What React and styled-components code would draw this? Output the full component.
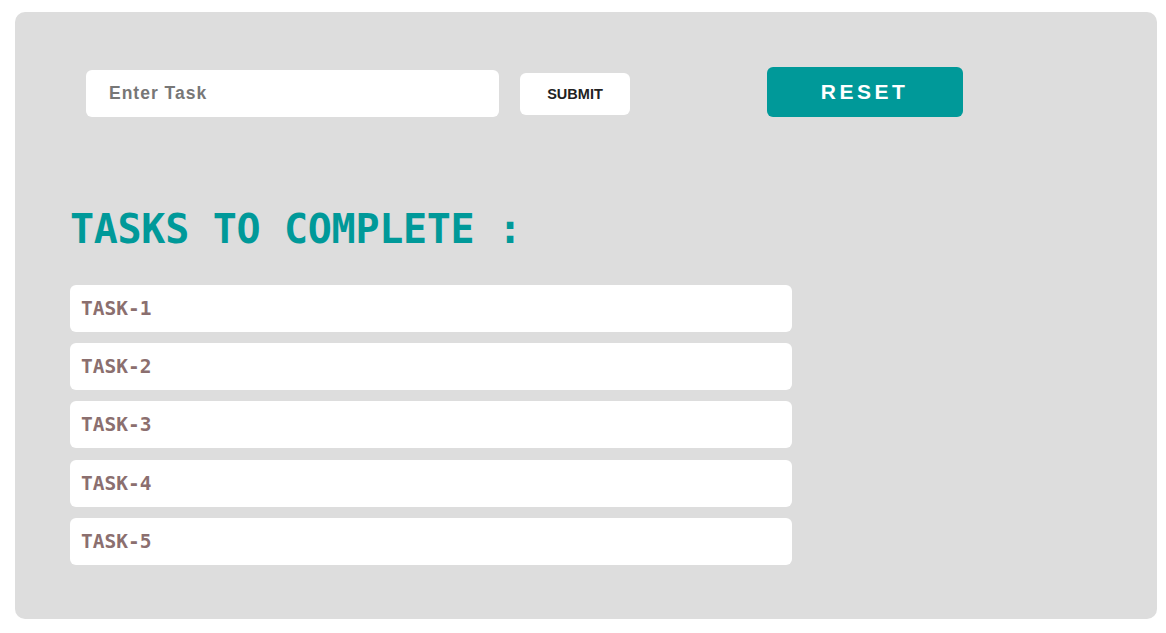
import React from "react";
import styled, { createGlobalStyle } from "styled-components";

const Global = createGlobalStyle`
  html, body { margin: 0; padding: 0; background: #ffffff; }
  body { font-family: "Liberation Sans", Arial, sans-serif; }
`;

const Page = styled.div`
  padding: 12px 9px 14px 15px;
`;

const Panel = styled.main`
  background: #dddddd;
  border-radius: 10px;
  height: 607px;
  box-sizing: border-box;
  padding: 55px 0 0 55px;
`;

const Toolbar = styled.form`
  display: flex;
  align-items: center;
  height: 50px;
  padding-left: 16px;
`;

const TaskInput = styled.input`
  width: 413px;
  height: 47px;
  box-sizing: border-box;
  border: none;
  border-radius: 6px;
  background: #ffffff;
  padding: 0 0 0 23px;
  margin-top: 2px;
  font-family: "Liberation Sans", Arial, sans-serif;
  font-weight: 700;
  font-size: 17.5px;
  letter-spacing: 1px;
  color: #333;
  outline: none;
  &::placeholder { color: #777777; opacity: 1; }
`;

const SubmitButton = styled.button`
  margin-left: 21px;
  margin-top: 4px;
  width: 110px;
  height: 42px;
  border: none;
  border-radius: 6px;
  background: #ffffff;
  color: #222222;
  font-family: "Liberation Sans", Arial, sans-serif;
  font-weight: 700;
  font-size: 14.5px;
  padding: 0;
  cursor: pointer;
`;

const ResetButton = styled.button`
  margin-left: 137px;
  width: 196px;
  height: 50px;
  border: none;
  border-radius: 6px;
  background: #009999;
  color: #ffffff;
  font-family: "Liberation Sans", Arial, sans-serif;
  font-weight: 700;
  font-size: 21px;
  letter-spacing: 3.5px;
  padding: 0 1px 0 0;
  cursor: pointer;
`;

const Heading = styled.h2`
  margin: 88px 0 0 0;
  font-family: "DejaVu Sans Mono", "Liberation Mono", monospace;
  font-weight: 700;
  font-size: 40px;
  line-height: 48px;
  letter-spacing: -0.3px;
  color: #009999;
  white-space: pre;
`;

const TaskList = styled.ul`
  list-style: none;
  margin: 32px 0 0 0;
  padding: 0;
  width: 722px;
  display: flex;
  flex-direction: column;
  gap: 11.2px;
`;

const TaskItem = styled.li`
  background: #ffffff;
  border-radius: 6px;
  height: 47px;
  box-sizing: border-box;
  padding: 0 0 0 11px;
  display: flex;
  align-items: center;
  font-family: "DejaVu Sans Mono", "Liberation Mono", monospace;
  font-weight: 700;
  font-size: 19.5px;
  color: #8b6f6f;
`;

const tasks = ["TASK-1", "TASK-2", "TASK-3", "TASK-4", "TASK-5"];

export default function App() {
  return (
    <Page>
      <Global />
      <Panel>
        <Toolbar onSubmit={(e) => e.preventDefault()}>
          <TaskInput placeholder="Enter Task" />
          <SubmitButton type="submit">SUBMIT</SubmitButton>
          <ResetButton type="button">RESET</ResetButton>
        </Toolbar>
        <Heading>TASKS TO COMPLETE :</Heading>
        <TaskList>
          {tasks.map((t) => (
            <TaskItem key={t}>{t}</TaskItem>
          ))}
        </TaskList>
      </Panel>
    </Page>
  );
}
